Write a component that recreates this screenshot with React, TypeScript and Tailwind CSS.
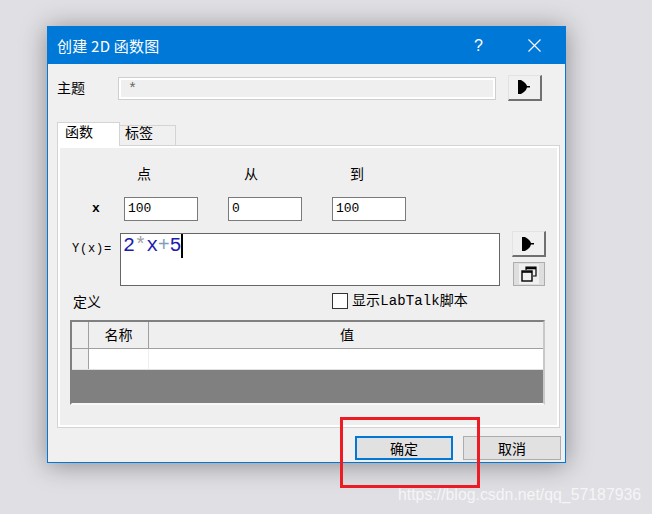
const ui = { fontFamily: '"Noto Sans CJK SC", "Liberation Sans", sans-serif' };
const mono = { fontFamily: '"Liberation Mono", "Noto Sans CJK SC", monospace' };

function ArrowIcon() {
  return (
    <svg width="13" height="14" viewBox="0 0 13 14">
      <path d="M0 0H3L6 2L8 4L9 6H12V7.5H9L8 10L6 12L3 14H0Z" fill="#000" />
    </svg>
  );
}

function ArrowButton({ className }: { className: string }) {
  return (
    <button className={`flex items-center justify-center bg-[#f0f0f0] border border-[#e3e3e3] border-r-2 border-b-2 border-r-[#707070] border-b-[#707070] ${className}`}>
      <ArrowIcon />
    </button>
  );
}

function NumberBox({ value }: { value: string }) {
  return (
    <div style={mono} className="w-[74px] h-[24px] bg-white border border-[#7a7a7a] pl-[3px] text-[13px] leading-[22px] text-black">
      {value}
    </div>
  );
}

export default function App() {
  return (
    <div className="w-[652px] h-[514px] bg-[#e0dfe4] pt-[26px] pl-[47px] overflow-hidden relative" style={ui}>
      {/* Dialog */}
      <div className="w-[519px] h-[437px] bg-[#f0f0f0] border border-[#0078d7] shadow-[0_2px_24px_rgba(0,0,0,0.38)] flex flex-col">
        <div className="h-[37px] bg-[#0078d7] flex items-center text-white shrink-0">
          <span className="ml-[9px] text-[15px] leading-none tracking-[0.25px]">创建 2D 函数图</span>
          <span style={{ fontFamily: '"Liberation Sans", sans-serif' }} className="ml-auto mr-[45px] text-[16px] font-light">?</span>
          <svg className="mr-[24px]" width="13" height="13" viewBox="0 0 13 13" fill="none" stroke="#fff" strokeWidth="1.1">
            <path d="M0.5 0.5L12.5 12.5M12.5 0.5L0.5 12.5" />
          </svg>
        </div>

        <div className="flex items-center h-[49px] pl-[9px] shrink-0">
          <span className="w-[61px] text-[14px] text-black leading-none -mt-[3px]">主题</span>
          <div className="w-[378px] h-[23px] border border-[#cfcfcf] bg-white p-[2px] -mt-[1px]">
            <div style={mono} className="h-full bg-[#efefef] pl-[7px] text-[15px] leading-[20px] text-[#666]">*</div>
          </div>
          <ArrowButton className="w-[34px] h-[26px] ml-[12px] -mt-[2px]" />
        </div>

        {/* Tabs */}
        <div className="flex items-end ml-[9px] h-[24px] mt-[9px] shrink-0 relative z-10">
          <div className="w-[63px] h-[24px] bg-white border border-b-0 border-[#d4d4d4] pl-[7px] text-[14px] leading-[16px] text-black">函数</div>
          <div className="w-[56px] h-[21px] bg-[#f0f0f0] border border-l-0 border-[#d4d4d4] pl-[5px] text-[14px] leading-[12px] text-black">标签</div>
        </div>

        <div className="ml-[9px] w-[503px] h-[283px] border border-[#d4d4d4] bg-white p-[2px] -mt-px">
          <div className="h-full bg-[#efefef] flex flex-col">
            <div className="flex h-[28px] mt-[11px] shrink-0 text-[14px] leading-[28px] text-black">
              <span className="ml-[77px] w-[107px]">点</span>
              <span className="w-[106px]">从</span>
              <span>到</span>
            </div>

            <div className="flex items-center h-[26px] mt-[9px] shrink-0">
              <span style={mono} className="ml-[32px] w-[32px] text-[13px] font-bold text-black">x</span>
              <NumberBox value="100" />
              <div className="w-[30px]" />
              <NumberBox value="0" />
              <div className="w-[30px]" />
              <NumberBox value="100" />
            </div>

            <div className="flex h-[53px] mt-[11px] shrink-0">
              <span style={mono} className="ml-[12px] w-[48px] text-[12px] leading-[32px] tracking-[0.8px] text-black whitespace-nowrap">Y(x)=</span>
              <div className="w-[380px] h-[53px] bg-white border border-[#666] flex items-start pl-[2px]">
                <span style={mono} className="text-[20px] leading-[24px] tracking-[-0.4px]">
                  <span className="text-[#1c1cb0]">2</span>
                  <span className="text-[#a0a0a0]">*</span>
                  <span className="text-[#1c1cb0]">x</span>
                  <span className="text-[#7f9fc0]">+</span>
                  <span className="text-[#1c1cb0]">5</span>
                </span>
                <span className="w-[2px] h-[24px] bg-black" />
              </div>
              <div className="flex flex-col ml-[12px] -mt-[2px] gap-[5px]">
                <ArrowButton className="w-[34px] h-[26px]" />
                <div className="w-[32px] h-[24px] ml-px bg-[#dedede] border border-[#adadad] flex items-center justify-center">
                  <div className="w-[20px] h-[20px] bg-[#f0f0f0] flex items-center justify-center">
                    <svg width="16" height="16" viewBox="0 0 16 16" fill="none" stroke="#000">
                      <path d="M5 4V1H15V10H12" strokeWidth="1.2" />
                      <path d="M5 2.2H15" strokeWidth="2.2" />
                      <rect x="1" y="5" width="10" height="10" strokeWidth="1.4" />
                      <path d="M1 6H11" strokeWidth="1.6" />
                    </svg>
                  </div>
                </div>
              </div>
            </div>

            <div className="flex items-center h-[24px] mt-[3px] shrink-0">
              <span className="ml-[13px] w-[259px] text-[14px] text-black leading-none">定义</span>
              <div className="w-[16px] h-[16px] bg-white border border-[#333]" />
              <span style={mono} className="ml-[4px] text-[14px] leading-none tracking-[0.1px] text-black whitespace-nowrap">显示LabTalk脚本</span>
            </div>

            {/* Grid */}
            <div className="mt-[7px] ml-[10px] w-[475px] h-[85px] border-2 border-[#808080] border-r-[#c8c8c8] border-b-[#f8f8f8] bg-[#808080] flex flex-col">
              <div className="flex h-[27px] bg-[#efefef] border-b border-[#a0a0a0] text-[14px] text-black shrink-0">
                <div className="w-[17px] border-r border-[#a0a0a0]" />
                <div className="w-[60px] border-r border-[#a0a0a0] text-center leading-[25px]">名称</div>
                <div className="flex-1 text-center leading-[25px] pl-[2px]">值</div>
              </div>
              <div className="flex h-[21px] bg-white border-b border-[#e0e0e0] shrink-0">
                <div className="w-[17px] bg-[#efefef] border-r border-[#a0a0a0]" />
                <div className="w-[60px] border-r border-[#eeeeee]" />
              </div>
            </div>
          </div>
        </div>

        <div className="flex justify-end gap-[10px] mt-[8px] mr-[4px] shrink-0">
          <button className="w-[98px] h-[24px] bg-[#e1e1e1] border-2 border-[#0078d7] text-[14px] leading-none text-black">确定</button>
          <button className="w-[98px] h-[24px] bg-[#e1e1e1] border border-[#adadad] text-[14px] leading-none text-black">取消</button>
        </div>
      </div>

      {/* Red annotation box drawn over the screenshot */}
      <div className="absolute left-[340px] top-[417px] w-[140px] h-[71px] border-[3px] border-[#ed1c24]" />

      {/* Watermark */}
      <span style={{ fontFamily: '"Liberation Sans", sans-serif' }} className="absolute left-[398px] top-[484px] text-[15.85px] leading-[22px] text-white/70 whitespace-nowrap">
        https://blog.csdn.net/qq_57187936
      </span>
    </div>
  );
}
